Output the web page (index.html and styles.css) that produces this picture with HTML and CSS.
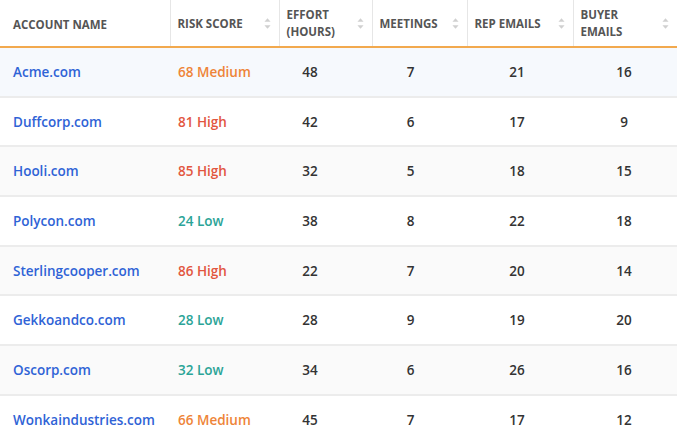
FILE: index.html
```html
<!DOCTYPE html>
<html>
<head>
<meta charset="utf-8">
<link rel="stylesheet" href="styles.css">
</head>
<body>
<table class="grid">
  <colgroup>
    <col class="c-name"><col class="c-risk"><col class="c-effort"><col class="c-meet"><col class="c-rep"><col class="c-buyer">
  </colgroup>
  <thead>
    <tr>
      <th class="h-name"><span class="hlabel">Account Name</span></th>
      <th><div class="hcell"><span class="hlabel">Risk Score</span><svg class="sort" viewBox="0 0 8 14"><path d="M4 1 L7.5 5 H0.5 Z"/><path d="M4 13 L7.5 9 H0.5 Z"/></svg></div></th>
      <th><div class="hcell"><span class="hlabel">Effort<br>(Hours)</span><svg class="sort" viewBox="0 0 8 14"><path d="M4 1 L7.5 5 H0.5 Z"/><path d="M4 13 L7.5 9 H0.5 Z"/></svg></div></th>
      <th><div class="hcell"><span class="hlabel">Meetings</span><svg class="sort" viewBox="0 0 8 14"><path d="M4 1 L7.5 5 H0.5 Z"/><path d="M4 13 L7.5 9 H0.5 Z"/></svg></div></th>
      <th><div class="hcell"><span class="hlabel">Rep Emails</span><svg class="sort" viewBox="0 0 8 14"><path d="M4 1 L7.5 5 H0.5 Z"/><path d="M4 13 L7.5 9 H0.5 Z"/></svg></div></th>
      <th class="h-last"><div class="hcell"><span class="hlabel">Buyer<br>Emails</span><svg class="sort" viewBox="0 0 8 14"><path d="M4 1 L7.5 5 H0.5 Z"/><path d="M4 13 L7.5 9 H0.5 Z"/></svg></div></th>
    </tr>
  </thead>
  <tbody>
    <tr class="hover"><td class="name">Acme.com</td><td class="risk med">68 Medium</td><td class="n effort">48</td><td class="n meet">7</td><td class="n rep">21</td><td class="n buyer">16</td></tr>
    <tr><td class="name">Duffcorp.com</td><td class="risk high">81 High</td><td class="n effort">42</td><td class="n meet">6</td><td class="n rep">17</td><td class="n buyer">9</td></tr>
    <tr class="alt"><td class="name">Hooli.com</td><td class="risk high">85 High</td><td class="n effort">32</td><td class="n meet">5</td><td class="n rep">18</td><td class="n buyer">15</td></tr>
    <tr><td class="name">Polycon.com</td><td class="risk low">24 Low</td><td class="n effort">38</td><td class="n meet">8</td><td class="n rep">22</td><td class="n buyer">18</td></tr>
    <tr class="alt"><td class="name">Sterlingcooper.com</td><td class="risk high">86 High</td><td class="n effort">22</td><td class="n meet">7</td><td class="n rep">20</td><td class="n buyer">14</td></tr>
    <tr><td class="name">Gekkoandco.com</td><td class="risk low">28 Low</td><td class="n effort">28</td><td class="n meet">9</td><td class="n rep">19</td><td class="n buyer">20</td></tr>
    <tr class="alt"><td class="name">Oscorp.com</td><td class="risk low">32 Low</td><td class="n effort">34</td><td class="n meet">6</td><td class="n rep">26</td><td class="n buyer">16</td></tr>
    <tr><td class="name">Wonkaindustries.com</td><td class="risk med">66 Medium</td><td class="n effort">45</td><td class="n meet">7</td><td class="n rep">17</td><td class="n buyer">12</td></tr>
  </tbody>
</table>
</body>
</html>
```
FILE: styles.css
```css
html, body {
  margin: 0;
  padding: 0;
  background: #ffffff;
}
body {
  font-family: "Open Sans", "Liberation Sans", sans-serif;
  overflow: hidden;
}
.grid {
  width: 677px;
  border-collapse: collapse;
  table-layout: fixed;
}
.c-name { width: 170px; }
.c-risk { width: 109px; }
.c-effort { width: 93px; }
.c-meet { width: 95px; }
.c-rep { width: 106px; }
.c-buyer { width: 104px; }

thead th {
  height: 47px;
  padding: 0 8px 0 7px;
  border-right: 1px solid #e6e6e6;
  border-bottom: 2px solid #f2a94e;
  text-align: left;
  vertical-align: middle;
  box-sizing: border-box;
}
thead th.h-name { padding-left: 13px; }
thead th.h-last { border-right: none; }
.hcell {
  display: flex;
  align-items: center;
  justify-content: space-between;
}
.hlabel {
  font-size: 11.5px;
  font-weight: 700;
  text-transform: uppercase;
  color: #555555;
  line-height: 17px;
}
.sort {
  width: 7px;
  height: 13px;
  fill: #d0d0d0;
  flex: none;
}

tbody tr {
  height: 49.7px;
}
tbody td {
  border-bottom: 2px solid #ececec;
  font-size: 13.5px;
  font-weight: 600;
  padding: 0;
  vertical-align: middle;
  white-space: nowrap;
}
tbody tr.hover td { background: #f6f9fd; }
tbody tr.alt td { background: #fafafa; }

.name {
  padding-left: 13px;
  color: #2f63d6;
}
.risk { padding-left: 8px; }
.med { color: #ee8438; }
.high { color: #e2563f; }
.low { color: #2ba497; }

.n {
  color: #333333;
  text-align: center;
}
.effort { padding-right: 31px; }
.meet { padding-right: 18px; }
.rep { padding-right: 6px; }
.buyer { padding-right: 2px; }
```
